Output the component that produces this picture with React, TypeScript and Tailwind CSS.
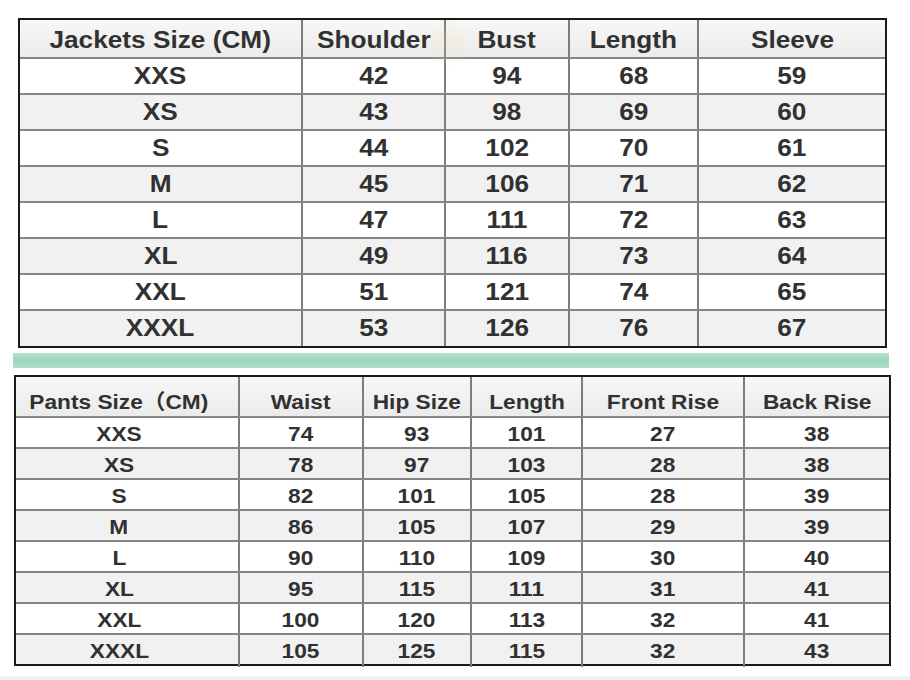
import clsx from 'clsx'

const jacketHead = ['Jackets Size (CM)', 'Shoulder', 'Bust', 'Length', 'Sleeve']
const jacketRows = [
  ['XXS', '42', '94', '68', '59'],
  ['XS', '43', '98', '69', '60'],
  ['S', '44', '102', '70', '61'],
  ['M', '45', '106', '71', '62'],
  ['L', '47', '111', '72', '63'],
  ['XL', '49', '116', '73', '64'],
  ['XXL', '51', '121', '74', '65'],
  ['XXXL', '53', '126', '76', '67'],
]

const pantsHead = ['Pants Size（CM)', 'Waist', 'Hip Size', 'Length', 'Front Rise', 'Back Rise']
const pantsRows = [
  ['XXS', '74', '93', '101', '27', '38'],
  ['XS', '78', '97', '103', '28', '38'],
  ['S', '82', '101', '105', '28', '39'],
  ['M', '86', '105', '107', '29', '39'],
  ['L', '90', '110', '109', '30', '40'],
  ['XL', '95', '115', '111', '31', '41'],
  ['XXL', '100', '120', '113', '32', '41'],
  ['XXXL', '105', '125', '115', '32', '43'],
]

const Cell = ({ text, first, big, head }: { text: string; first: boolean; big: boolean; head?: boolean }) => (
  <div
    className={clsx(
      'flex items-center justify-center overflow-visible whitespace-nowrap',
      !first && 'border-l-2 border-[#7d7d7d]',
      first && !big && 'pr-[16px]',
      head && big && 'pt-[3px]',
      head && !big && 'pt-[9px]',
    )}
  >
    <span
      className={clsx(
        'inline-block font-bold text-[#313131]',
        big ? 'text-[23px] scale-x-[1.14]' : 'text-[21px] scale-x-[1.08]',
      )}
    >
      {text}
    </span>
  </div>
)

export default function App() {
  return (
    <div
      className="relative flex h-[680px] w-[910px] flex-col bg-white"
      style={{ fontFamily: '"Liberation Sans", Arial, "Noto Sans CJK SC", sans-serif' }}
    >
      {/* jackets */}
      <div className="ml-[18px] mt-[18px] flex h-[330px] w-[869px] flex-col border-2 border-[#1a1a1a]">
        <div className="grid h-[37px] grid-cols-[281px_143px_124px_129px_188px] bg-gradient-to-b from-[#f7f7f7] to-[#ebebeb]">
          {jacketHead.map((h, i) => (
            <Cell key={h} text={h} first={i === 0} big head />
          ))}
        </div>
        {jacketRows.map((row, r) => (
          <div
            key={row[0]}
            className={clsx(
              'grid grid-cols-[281px_143px_124px_129px_188px] border-t-2 border-[#858585]',
              r === jacketRows.length - 1 ? 'h-[37px]' : 'h-[36px]',
              r % 2 === 1 ? 'bg-[#f1f1f1]' : 'bg-white',
            )}
          >
            {row.map((c, i) => (
              <Cell key={i} text={c} first={i === 0} big />
            ))}
          </div>
        ))}
      </div>

      {/* green divider */}
      <div className="ml-[13px] mt-[5px] h-[15px] w-[876px] bg-gradient-to-b from-[#b5e2ce] via-[#9bd5bc] to-[#afdec9]" />

      {/* pants */}
      <div className="ml-[14px] mt-[7px] flex h-[291px] w-[877px] flex-col border-2 border-[#1a1a1a]">
        <div className="grid h-[39px] grid-cols-[222px_124px_108px_111px_162px_146px] bg-gradient-to-b from-[#f7f7f7] to-[#ebebeb]">
          {pantsHead.map((h, i) => (
            <Cell key={h} text={h} first={i === 0} big={false} head />
          ))}
        </div>
        {pantsRows.map((row, r) => (
          <div
            key={row[0]}
            className={clsx(
              'grid h-[31px] grid-cols-[222px_124px_108px_111px_162px_146px] border-t-2 border-[#858585]',
              r % 2 === 1 ? 'bg-[#f1f1f1]' : 'bg-white',
            )}
          >
            {row.map((c, i) => (
              <Cell key={i} text={c} first={i === 0} big={false} />
            ))}
          </div>
        ))}
      </div>

      <div className="mt-auto h-[4px] w-full bg-[#f1f1f1]" />

      {/* faint watermark */}
      <div className="pointer-events-none absolute left-[420px] top-[20px] h-[46px] w-[56px] rounded-full bg-[radial-gradient(circle,rgba(240,222,160,0.22),rgba(255,255,255,0)_70%)]" />
    </div>
  )
}
